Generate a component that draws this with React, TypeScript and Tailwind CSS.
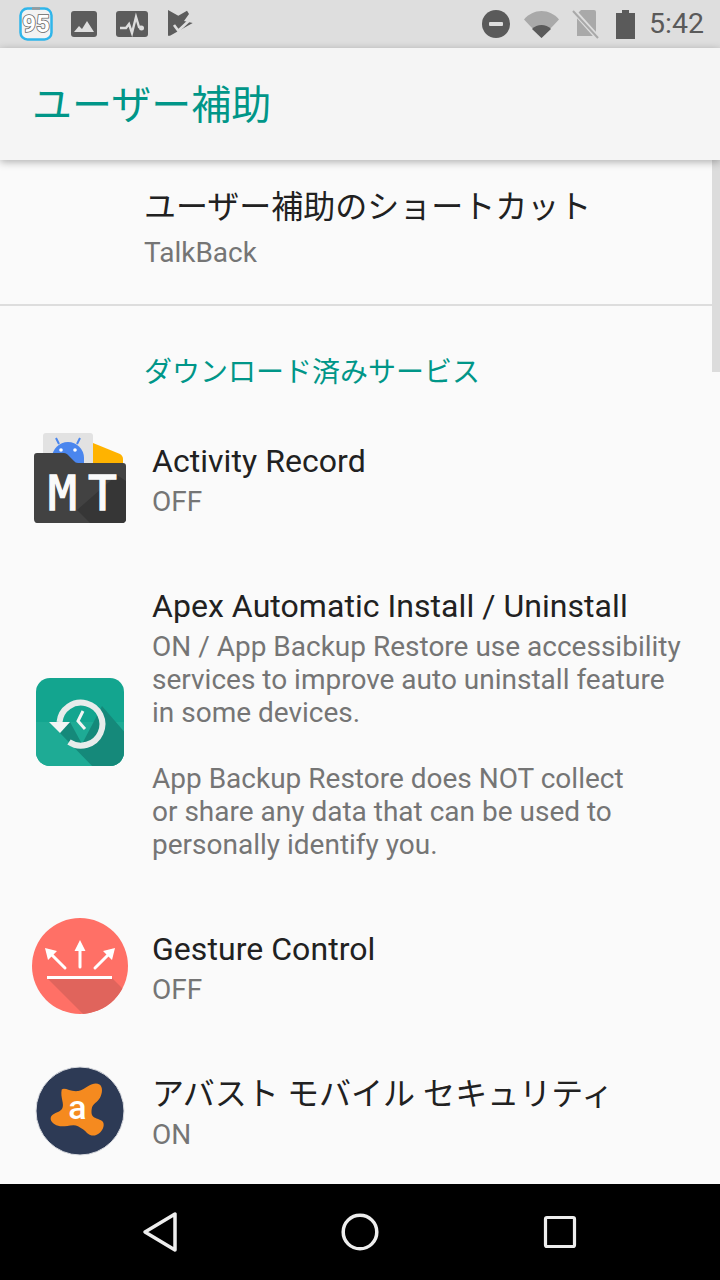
const FONT_STACK = "font-['Roboto','Noto_Sans_CJK_JP',sans-serif]";

function StatusBar() {
  return (
    <div className="flex h-12 items-center bg-[#dedede] pl-[19px] pr-4">
      <svg width="34" height="34" viewBox="0 0 34 34">
        <rect x="1.5" y="1.5" width="31" height="31" rx="7" fill="#f3f3f3" stroke="#2fb5ea" strokeWidth="2.5" />
        <path d="M13 1.500h8" stroke="#999" strokeWidth="2.500" />
        <text x="17" y="25" textAnchor="middle" fontFamily="Roboto" fontWeight="700" fontSize="24" fill="#fff" stroke="#666" strokeWidth="1.600" paintOrder="stroke">95</text>
      </svg>
      <svg className="ml-[18px]" width="26" height="26" viewBox="0 0 26 26">
        <rect width="26" height="26" rx="3" fill="#5c5c5c" />
        <path d="M3 21l5-6 3 3 5-8 7 11z" fill="#dedede" />
      </svg>
      <svg className="ml-[19px]" width="32" height="26" viewBox="0 0 32 26">
        <rect width="32" height="26" rx="3" fill="#5c5c5c" />
        <path d="M4 17h6l3-4 3 9 4-16 3 10h2" fill="none" stroke="#dedede" strokeWidth="2.4" />
        <circle cx="25.500" cy="17" r="2.500" fill="#dedede" />
      </svg>
      <svg className="ml-5" width="26" height="28" viewBox="0 0 26 28">
        <path d="M0 0l10.300 5.700L19 .7 21 4l-5 7 8.700 2L2 25.700H0z" fill="#5c5c5c" />
        <path d="M6 15l4.300 5.700L22 9.700" fill="none" stroke="#dedede" strokeWidth="2.600" />
      </svg>
      <div className="flex-1" />
      <svg width="28" height="28" viewBox="0 0 28 28">
        <circle cx="14" cy="14" r="14" fill="#5a5a5a" />
        <rect x="7" y="12" width="14" height="4" rx="1" fill="#dedede" />
      </svg>
      <svg className="ml-[14px]" width="35" height="28" viewBox="0 0 35 28">
        <path d="M0 9.500C4.500 4 11 1 17.500 1S30.500 4 35 9.500L17.500 28z" fill="#a9a9a9" />
        <path d="M8 19C10.500 16.500 14 15 17.500 15S24.500 16.500 27 19L17.500 28z" fill="#5a5a5a" />
      </svg>
      <svg className="ml-[13px]" width="28" height="30" viewBox="0 0 28 30">
        <path d="M5 5l4-4h13a2 2 0 0 1 2 2v24H5z" fill="#a9a9a9" />
        <path d="M1 1l25 28" stroke="#dedede" strokeWidth="5" />
        <path d="M1 2l25 27" stroke="#a9a9a9" strokeWidth="2" />
      </svg>
      <svg className="ml-4" width="19" height="29" viewBox="0 0 19 29">
        <path d="M6 0h7v3h6v26H0V3h6z" fill="#5a5a5a" />
      </svg>
      <span className="ml-[14px] text-[28.500px] leading-[48px] text-[#5a5a5a]">5:42</span>
    </div>
  );
}

function MtIcon() {
  return (
    <svg width="96" height="96" viewBox="0 0 96 96">
      <rect x="11" y="3" width="50" height="40" rx="3" fill="#e2e2e2" />
      <path d="M61 13l27 11c2 1 3 3 3 5v10H61z" fill="#ffb300" />
      <path d="M20 28a16 16 0 0 1 32 0v10H20z" fill="#4a86ee" />
      <path d="M27 14l-3-6M45 14l3-6" stroke="#4a86ee" strokeWidth="2" />
      <circle cx="29" cy="20" r="1.800" fill="#fff" />
      <circle cx="43" cy="20" r="1.800" fill="#fff" />
      <path d="M5 23h27c2 0 3 1 4 2l6 6c1 1 2 2 4 2h45c2 0 3 1 3 3v53c0 2-1 4-4 4H5c-2 0-3-2-3-4V26c0-2 1-3 3-3z" fill="#424242" />
      <path d="M45 80L85 45l9 6v38c0 2-1 4-4 4H58z" fill="#363636" />
      <text x="30.500" y="80" textAnchor="middle" fontFamily="'DejaVu Sans Mono'" fontSize="48" fill="#fafafa" stroke="#fafafa" strokeWidth="1.300">M</text>
      <text x="70.500" y="80" textAnchor="middle" fontFamily="'DejaVu Sans Mono'" fontSize="48" fill="#fafafa" stroke="#fafafa" strokeWidth="1.300">T</text>
    </svg>
  );
}

function ApexIcon() {
  return (
    <svg width="96" height="96" viewBox="0 0 96 96">
      <defs>
        <clipPath id="apex-clip">
          <rect x="4" y="4" width="88" height="88" rx="14" />
        </clipPath>
      </defs>
      <g clipPath="url(#apex-clip)">
        <rect x="4" y="4" width="88" height="88" fill="#13a58f" />
        <rect x="4" y="48" width="88" height="44" fill="#1eab95" />
        <path d="M28 59L38 48 50 70 70 32 96 62v34H64z" fill="#15897a" />
      </g>
      <path d="M27.500 48A21.500 21.500 0 1 1 37 68" fill="none" stroke="#e8eceb" strokeWidth="6" />
      <path d="M17 48h21L28 59z" fill="#f3f5f4" />
      <path d="M51 37l-5 10 7 8" fill="none" stroke="#f3f5f4" strokeWidth="3" />
    </svg>
  );
}

function GestureIcon() {
  return (
    <svg width="96" height="96" viewBox="0 0 96 96">
      <defs>
        <clipPath id="gesture-clip">
          <circle cx="48" cy="48" r="48" />
        </clipPath>
      </defs>
      <circle cx="48" cy="48" r="48" fill="#ff7066" />
      <path d="M15 60h65l20 20v20H55z" fill="#e0645c" clipPath="url(#gesture-clip)" />
      <rect x="15" y="58" width="65" height="3" fill="#fff" />
      <path d="M48 49V27M33 50L18 35M63 50L78 35" stroke="#fff" strokeWidth="3" strokeLinecap="round" />
      <path d="M48 22l5.500 11h-11zM13 30l12 3-9 9zM83 30l-3 12-9-9z" fill="#fff" />
    </svg>
  );
}

function AvastIcon() {
  return (
    <svg width="96" height="96" viewBox="0 0 96 96">
      <circle cx="48" cy="48" r="44" fill="#2d3a55" stroke="#d9dbe0" strokeWidth="1" />
      <path d="M29.700 26.500C33 24 38 29 46.300 28C50 27.500 53 25 56.300 23C60 20.500 64.700 19.500 67.500 21.500C71 24 70.500 30 68 34.800C65.500 39.500 60.500 40.500 59.700 46C59 51 60 53.500 63 54.800C67 57 72 57 71.700 62C71.500 68 65 73.500 59.700 72.500C55 71.500 54 68 51.300 66.500C47 63.500 44 62 41.300 62.200C36 62.500 32 63.800 28 63.200C23 62.500 18 59 18.700 54.800C19.500 50 27 50 30 46C33 41 28 35 29.700 26.500z" fill="#f58a1f" />
      <text x="45.500" y="55.500" textAnchor="middle" fontFamily="Roboto" fontWeight="500" fontSize="34" fill="#fff">a</text>
    </svg>
  );
}

type ServiceRowProps = {
  icon: React.ReactNode;
  title: string;
  summary: string[];
};

function ServiceRow({ icon, title, summary }: ServiceRowProps) {
  return (
    <div className="flex items-center py-[33px]">
      <div className="-mb-[15px] -mt-[17px] flex w-[152px] shrink-0 justify-center pl-2">{icon}</div>
      <div>
        <div className="text-[32px] leading-[44px] tracking-[0.05px] text-[#212121]">{title}</div>
        <div className="mt-[2px] text-[28px] leading-[33px] text-[#757575]">
          {summary.map((line, index) => (
            <div key={index} className="min-h-[33px] whitespace-nowrap">
              {line}
            </div>
          ))}
        </div>
      </div>
    </div>
  );
}

export default function App() {
  return (
    <div className={`flex h-[1280px] w-[720px] flex-col overflow-hidden bg-[#fafafa] ${FONT_STACK}`}>
      <StatusBar />
      <div className="relative z-10 flex h-[112px] shrink-0 items-center bg-[#f5f5f5] pl-8 pt-1 shadow-[0_2px_8px_rgba(0,0,0,0.3)]">
        <h1 className="text-[40px] font-normal leading-none text-[#009688]">ユーザー補助</h1>
      </div>
      <div className="relative min-h-0 flex-1 overflow-hidden">
        <div className="absolute right-0 top-0 h-[212px] w-2 bg-[#dcdcdc]" />
        <div className="h-[146px] border-b-2 border-[#dddddd] pl-[144px] pt-[25px]">
          <div className="text-[32px] leading-[44px] text-[#212121]">ユーザー補助のショートカット</div>
          <div className="mt-[7px] text-[28px] leading-[33px] text-[#757575]">TalkBack</div>
        </div>
        <div className="pb-[17px] pl-[144px] pt-[50px] text-[28px] leading-[33px] text-[#009688]">ダウンロード済みサービス</div>
        <ServiceRow icon={<MtIcon />} title="Activity Record" summary={["OFF"]} />
        <ServiceRow
          icon={<ApexIcon />}
          title="Apex Automatic Install / Uninstall"
          summary={[
            "ON / App Backup Restore use accessibility",
            "services to improve auto uninstall feature",
            "in some devices.",
            "",
            "App Backup Restore does NOT collect",
            "or share any data that can be used to",
            "personally identify you.",
          ]}
        />
        <ServiceRow icon={<GestureIcon />} title="Gesture Control" summary={["OFF"]} />
        <ServiceRow icon={<AvastIcon />} title="アバスト モバイル セキュリティ" summary={["ON"]} />
      </div>
      <div className="flex h-24 shrink-0 items-center justify-center bg-black">
        <div className="flex w-[200px] justify-center">
          <svg width="40" height="44" viewBox="0 0 40 44">
            <path d="M5 22L35 4v36z" fill="none" stroke="#eeeeee" strokeWidth="3.500" strokeLinejoin="round" />
          </svg>
        </div>
        <div className="flex w-[200px] justify-center">
          <svg width="40" height="40" viewBox="0 0 40 40">
            <circle cx="20" cy="20" r="16.800" fill="none" stroke="#eeeeee" strokeWidth="3.500" />
          </svg>
        </div>
        <div className="flex w-[200px] justify-center">
          <svg width="36" height="36" viewBox="0 0 36 36">
            <rect x="3.500" y="3.500" width="29" height="29" rx="1.500" fill="none" stroke="#eeeeee" strokeWidth="3.200" />
          </svg>
        </div>
      </div>
    </div>
  );
}
